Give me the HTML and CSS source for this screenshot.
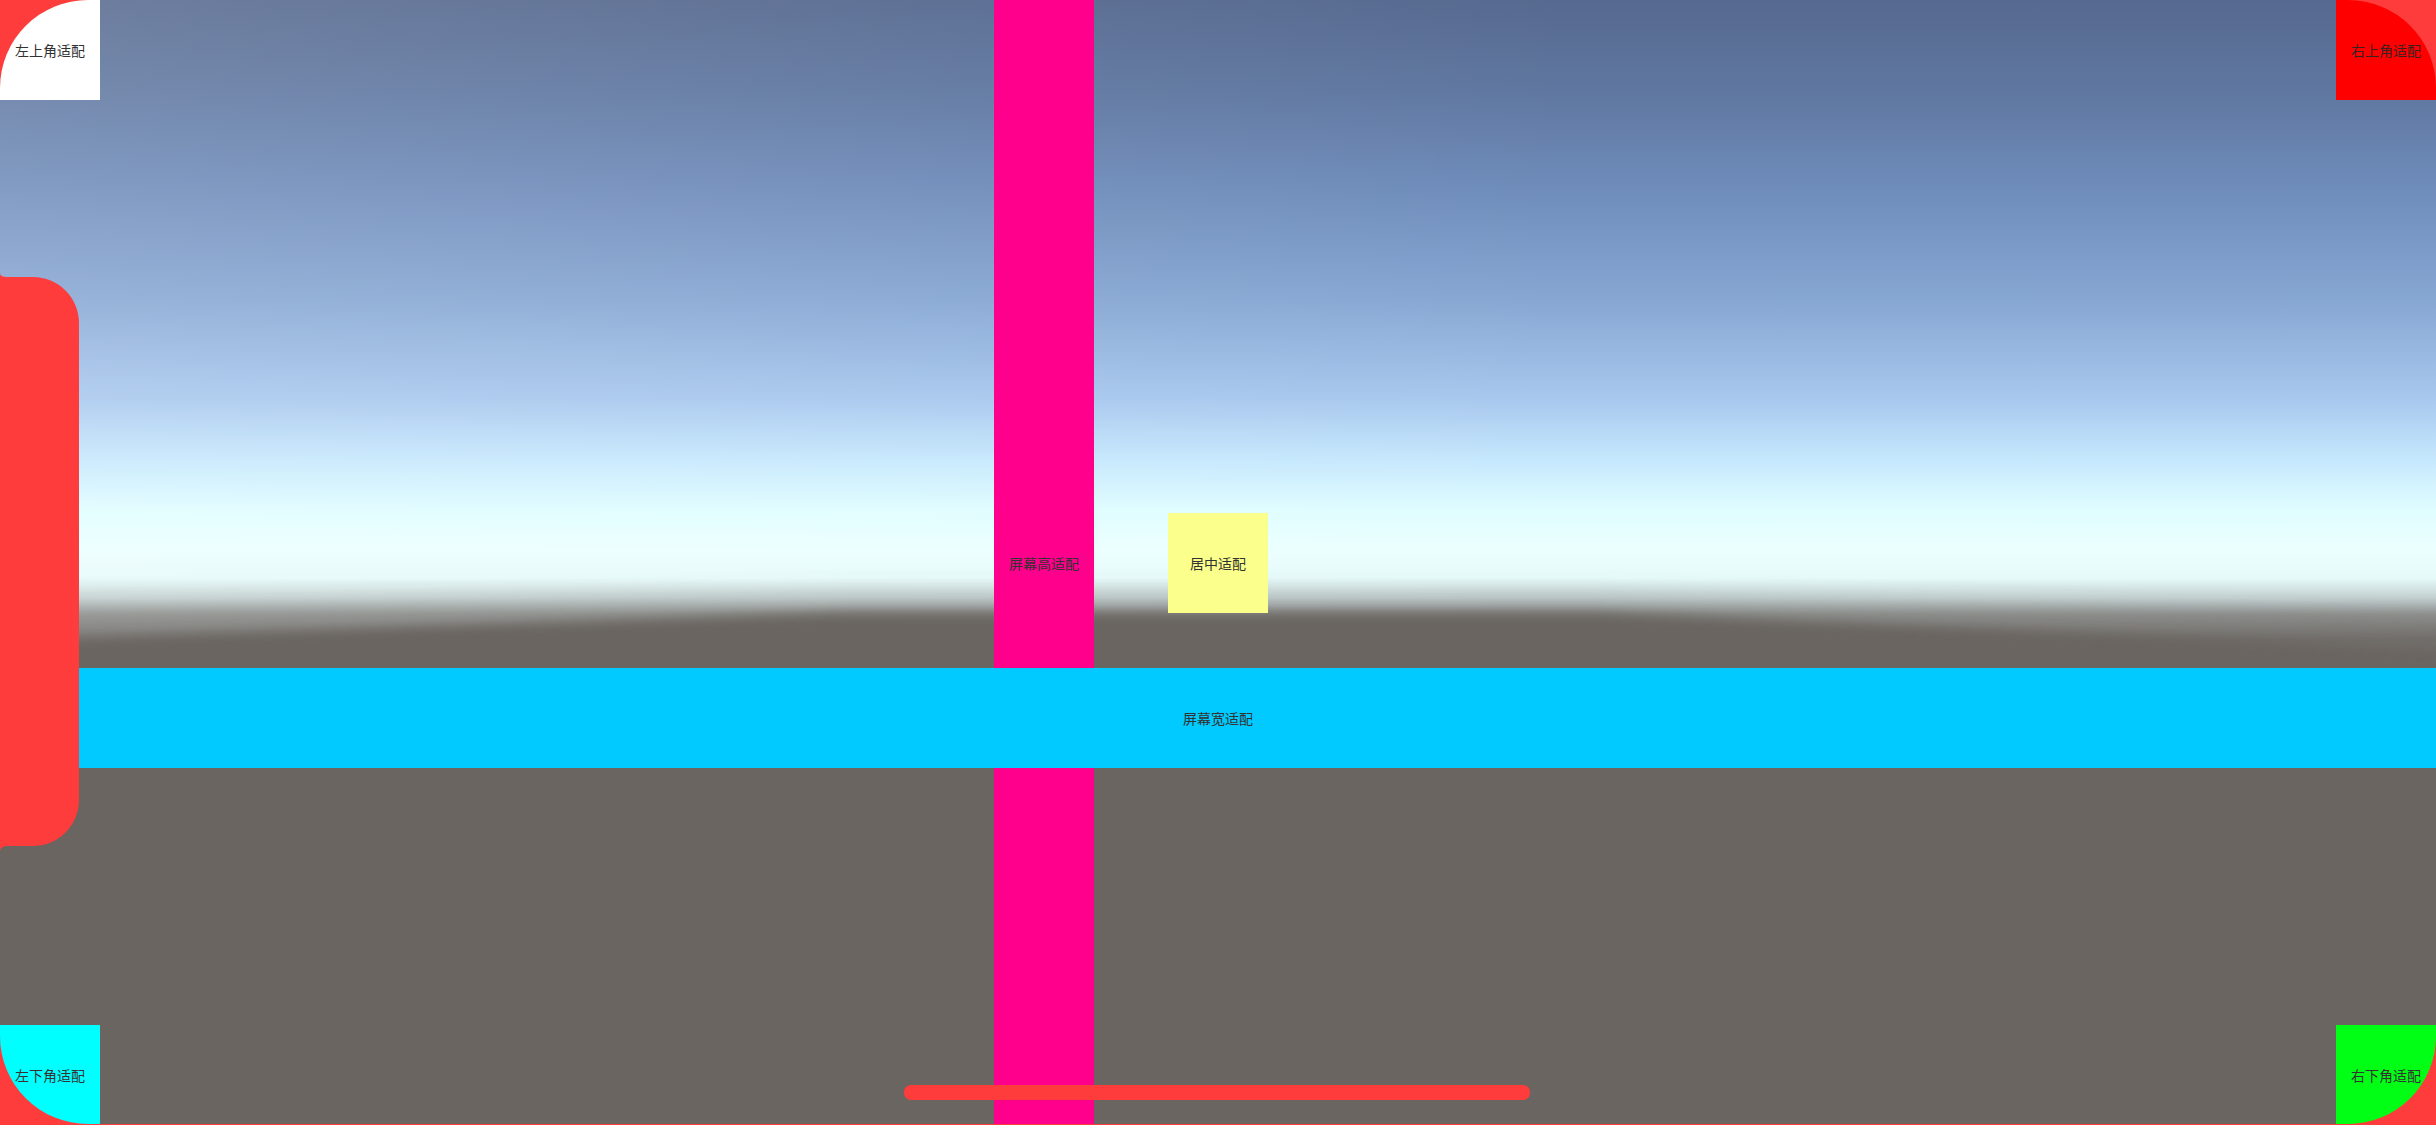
FILE: index.html
```html
<!DOCTYPE html>
<html lang="zh-CN">
<head>
<meta charset="utf-8">
<title>屏幕适配</title>
<link rel="stylesheet" href="styles.css">
</head>
<body>
<div class="screen">
  <svg class="ground" viewBox="0 0 2436 1125" preserveAspectRatio="none">
    <defs>
      <filter id="haze" x="-10%" y="-10%" width="120%" height="120%">
        <feGaussianBlur stdDeviation="12"/>
      </filter>
      <filter id="soft" x="-10%" y="-10%" width="120%" height="120%">
        <feGaussianBlur stdDeviation="6"/>
      </filter>
    </defs>
    <polygon class="haze" filter="url(#haze)" points="-200,622 840,596 1600,596 2636,632 2636,1300 -200,1300"/>
    <polygon class="land" filter="url(#soft)" points="-200,646 0,641 840,613 1600,613 2436,649 2636,654 2636,1300 -200,1300"/>
  </svg>

  <div class="bar-height"><span>屏幕高适配</span></div>
  <div class="box-center"><span>居中适配</span></div>
  <div class="bar-width"><span>屏幕宽适配</span></div>

  <div class="corner corner-tl"><span>左上角适配</span></div>
  <div class="corner corner-tr"><span>右上角适配</span></div>
  <div class="corner corner-bl"><span>左下角适配</span></div>
  <div class="corner corner-br"><span>右下角适配</span></div>

  <div class="display-mask"></div>
  <svg class="notch" viewBox="0 0 80 579" width="80" height="579">
    <path d="M0,0 C0,3 3,4 8,4 L33,4 A46,46 0 0 1 79,50 L79,527 A46,46 0 0 1 33,573 L8,573 C3,573 0,575 0,579 Z"/>
  </svg>
  <div class="home-indicator"></div>
</div>
</body>
</html>
```
FILE: styles.css
```css
html, body {
  margin: 0;
  padding: 0;
}

body {
  width: 2436px;
  height: 1125px;
  overflow: hidden;
  font-family: "Noto Sans CJK SC", "Noto Sans", sans-serif;
}

.screen {
  display: grid;
  grid-template-columns: 2436px;
  grid-template-rows: 1125px;
  width: 2436px;
  height: 1125px;
  overflow: hidden;
  background:
    linear-gradient(to right, rgba(255, 255, 255, 0.14) 0%, rgba(255, 255, 255, 0.05) 40%, rgba(255, 255, 255, 0) 65%),
    linear-gradient(to bottom,
      #56698f 0px,
      #5f77a0 90px,
      #6d8ab8 180px,
      #87a7d3 300px,
      #a8c8ee 400px,
      #c6e8fd 460px,
      #dffdff 510px,
      #ecffff 550px,
      #e6fafa 578px,
      #c2cfcf 598px,
      #8e908e 614px,
      #6b6561 640px,
      #6a6460 100%);
}

.screen > * {
  grid-area: 1 / 1;
}

.ground {
  width: 2436px;
  height: 1125px;
}

.ground .haze {
  fill: rgba(130, 132, 130, 0.28);
}

.ground .land {
  fill: #6b6561;
}

/* tall bar fitted to screen height */
.bar-height {
  justify-self: start;
  align-self: stretch;
  margin-left: 994px;
  width: 100px;
  background: #ff008c;
  display: flex;
  align-items: center;
  justify-content: center;
}

/* centered box */
.box-center {
  place-self: center;
  width: 100px;
  height: 100px;
  background: #fbff8c;
  display: flex;
  align-items: center;
  justify-content: center;
}

/* wide band fitted to screen width */
.bar-width {
  align-self: start;
  justify-self: stretch;
  margin-top: 668px;
  height: 100px;
  background: #00caff;
  display: flex;
  align-items: center;
  justify-content: center;
}

.corner {
  width: 100px;
  height: 100px;
  display: flex;
  align-items: center;
  justify-content: center;
}

.corner-tl {
  align-self: start;
  justify-self: start;
  background: #ffffff;
}

.corner-tr {
  align-self: start;
  justify-self: end;
  background: #ff0000;
}

.corner-bl {
  align-self: end;
  justify-self: start;
  background: #00ffff;
}

.corner-br {
  align-self: end;
  justify-self: end;
  background: #00ff14;
}

.screen span {
  font-size: 14px;
  line-height: 16px;
  color: #323232;
  white-space: nowrap;
}

.corner-tr span {
  color: #3c2020;
}

/* rounded display corners overlay */
.display-mask {
  align-self: start;
  justify-self: start;
  width: 2436px;
  height: 1124px;
  border-radius: 88px;
  box-shadow: 0 0 0 200px #ff3c3c;
  pointer-events: none;
}

.notch {
  align-self: start;
  justify-self: start;
  margin-top: 273px;
  display: block;
}

.notch path {
  fill: #ff3c3c;
}

.home-indicator {
  align-self: end;
  justify-self: start;
  margin-left: 904px;
  margin-bottom: 25px;
  width: 626px;
  height: 15px;
  border-radius: 7px;
  background: #ff3c3c;
}
```
